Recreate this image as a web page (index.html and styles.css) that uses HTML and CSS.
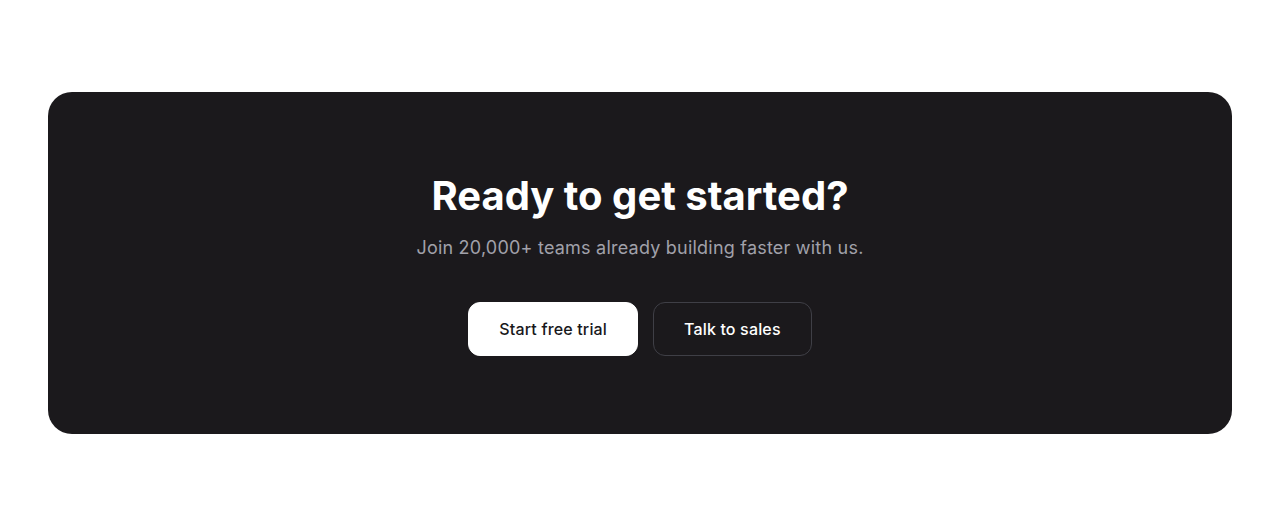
FILE: index.html
```html
<!DOCTYPE html>
<html lang="en">
<head>
<meta charset="utf-8">
<title>CTA</title>
<link rel="stylesheet" href="styles.css">
</head>
<body>
<section class="section">
  <div class="card">
    <h2 class="title">Ready to get started?</h2>
    <p class="subtitle">Join 20,000+ teams already building faster with us.</p>
    <div class="actions">
      <a class="btn btn-primary" href="#">Start free trial</a>
      <a class="btn btn-outline" href="#">Talk to sales</a>
    </div>
  </div>
</section>
</body>
</html>
```
FILE: styles.css
```css
* { box-sizing: border-box; }
html, body { margin: 0; padding: 0; background: #ffffff; }
body { font-family: Inter, "Noto Sans", sans-serif; -webkit-font-smoothing: antialiased; }
.section { padding: 92px 48px 93px; }
.card {
  background: #1b191c;
  border-radius: 24px;
  padding: 80px 32px 78px;
  display: flex;
  flex-direction: column;
  align-items: center;
  text-align: center;
}
.title {
  margin: 0;
  font-size: 40px;
  line-height: 48px;
  font-weight: 700;
  letter-spacing: 0;
  color: #ffffff;
}
.subtitle {
  margin: 14px 0 0;
  font-size: 18px;
  line-height: 28px;
  letter-spacing: 0.012em;
  color: #a1a1aa;
}
.actions {
  margin-top: 40px;
  display: flex;
  gap: 15px;
}
.btn {
  display: inline-flex;
  align-items: center;
  justify-content: center;
  height: 54px;
  padding: 0 30px;
  border-radius: 12px;
  font-size: 16px;
  font-weight: 500;
  letter-spacing: 0.01em;
  text-decoration: none;
  border: 1px solid transparent;
}
.btn-primary { background: #ffffff; color: #18181b; border-color: #ffffff; }
.btn-outline { background: transparent; color: #ffffff; border-color: #3f3f46; }
```
